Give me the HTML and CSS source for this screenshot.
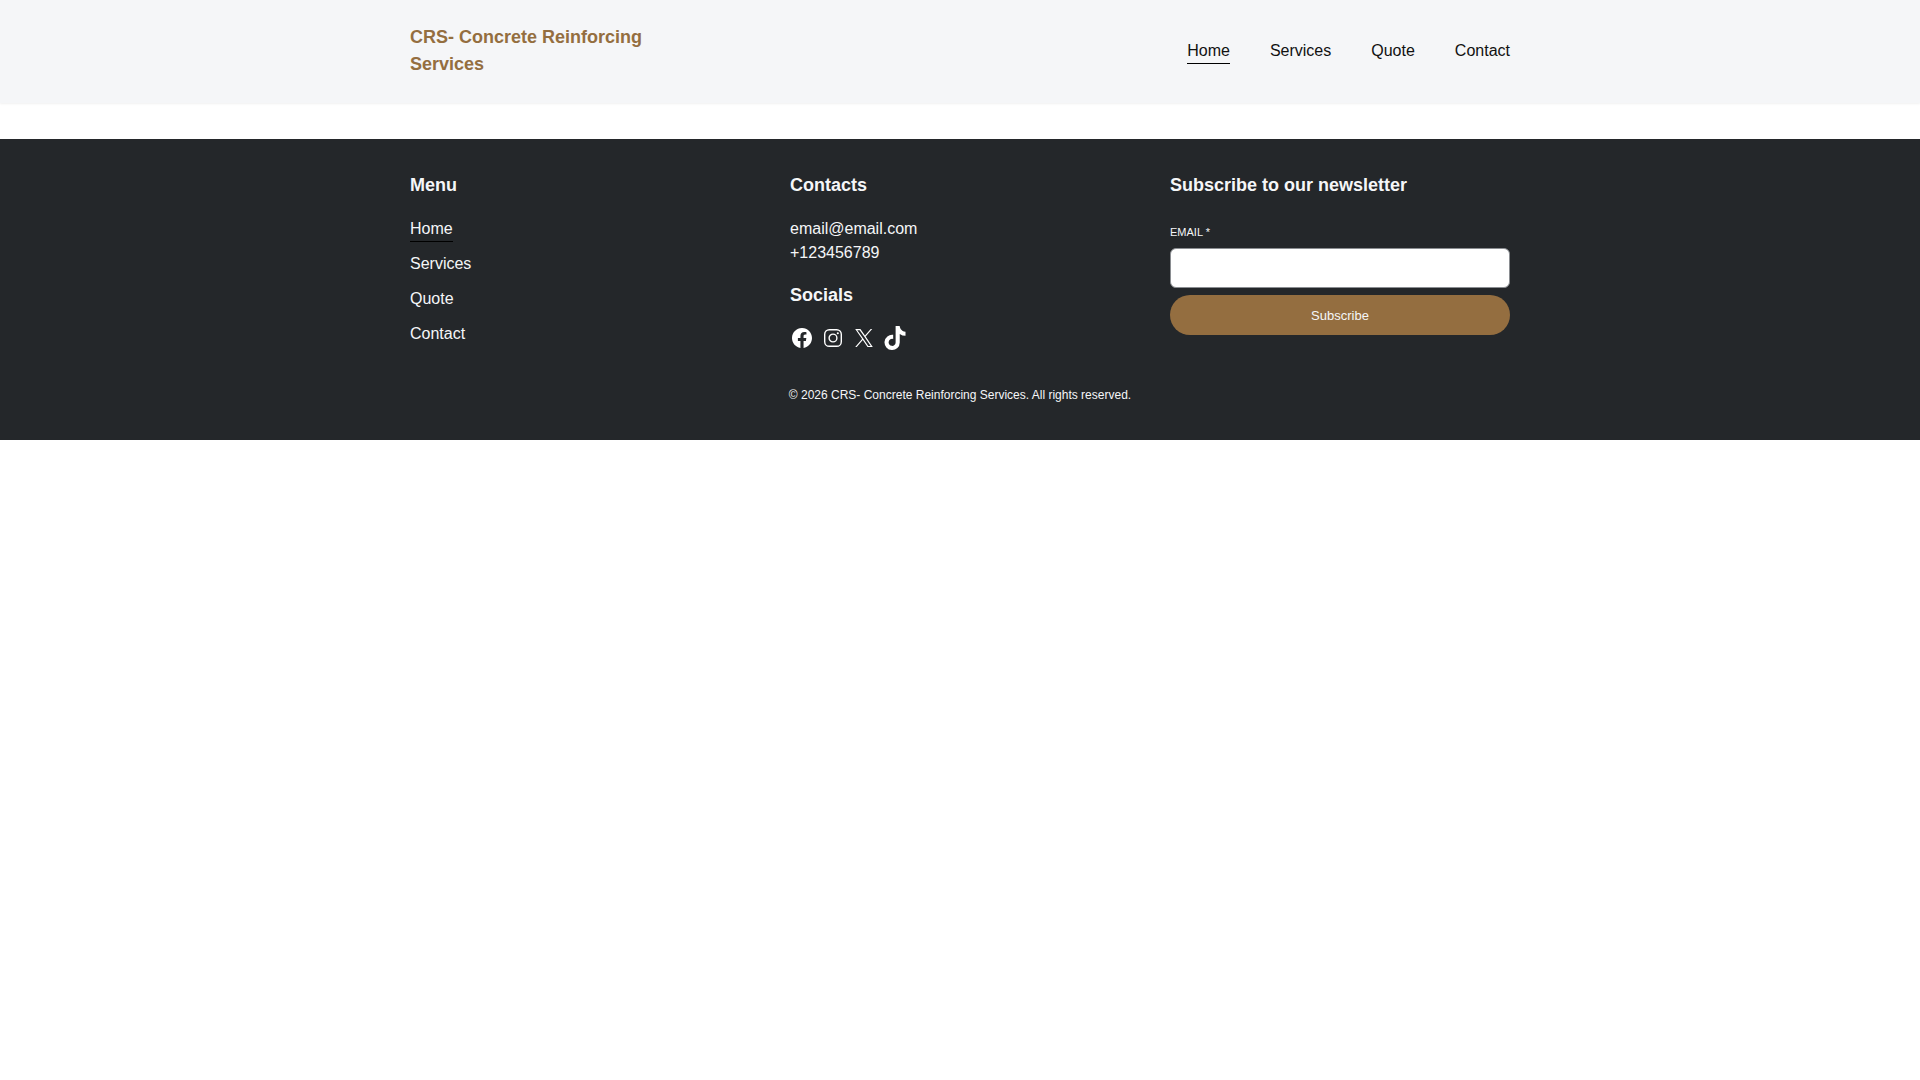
FILE: index.html
```html
<!DOCTYPE html>
<html lang="en">
<head>
<meta charset="utf-8">
<title>CRS- Concrete Reinforcing Services</title>
<link rel="stylesheet" href="styles.css">
</head>
<body>
<header class="site-header">
  <div class="container header-row">
    <a class="brand" href="#">CRS- Concrete Reinforcing Services</a>
    <nav class="main-nav">
      <a class="nav-link active" href="#">Home</a>
      <a class="nav-link" href="#">Services</a>
      <a class="nav-link" href="#">Quote</a>
      <a class="nav-link" href="#">Contact</a>
    </nav>
  </div>
</header>
<footer class="site-footer">
  <div class="container">
    <div class="footer-grid">
      <section class="col">
        <h3 class="footer-title">Menu</h3>
        <ul class="footer-menu">
          <li><a class="footer-link active" href="#">Home</a></li>
          <li><a class="footer-link" href="#">Services</a></li>
          <li><a class="footer-link" href="#">Quote</a></li>
          <li><a class="footer-link" href="#">Contact</a></li>
        </ul>
      </section>
      <section class="col">
        <h3 class="footer-title">Contacts</h3>
        <p class="contact-lines">email@email.com<br>+123456789</p>
        <h3 class="footer-title socials-title">Socials</h3>
        <div class="socials">
          <a class="social" href="#" aria-label="Facebook"><svg class="ic ic-fb" viewBox="0 0 16 16"><path fill="#fff" d="M16 8.049c0-4.446-3.582-8.05-8-8.05C3.58 0-.002 3.603-.002 8.05c0 4.017 2.926 7.347 6.75 7.951v-5.625h-2.03V8.05H6.75V6.275c0-2.017 1.195-3.131 3.022-3.131.876 0 1.791.157 1.791.157v1.98h-1.009c-.993 0-1.303.621-1.303 1.258v1.51h2.218l-.354 2.326H9.25V16c3.824-.604 6.75-3.934 6.75-7.951"/></svg></a>
          <a class="social" href="#" aria-label="Instagram"><svg class="ic ic-ig" viewBox="0 0 18 18"><rect x=".7" y=".7" width="16.6" height="16.6" rx="4.6" fill="none" stroke="#fff" stroke-width="1.4"/><circle cx="9" cy="9" r="3.9" fill="none" stroke="#fff" stroke-width="1.4"/><circle cx="13.8" cy="4.2" r="1.05" fill="#fff"/></svg></a>
          <a class="social" href="#" aria-label="X"><svg class="ic ic-x" viewBox="0 0 24 24"><path fill="#fff" d="M14.234 10.162 22.977 0h-2.072l-7.591 8.824L7.251 0H.258l9.168 13.343L.258 24H2.33l8.016-9.318L16.749 24h6.993zm-2.837 3.299-.929-1.329L3.076 1.56h3.182l5.965 8.532.929 1.329 7.754 11.09h-3.182z"/></svg></a>
          <a class="social" href="#" aria-label="TikTok"><svg class="ic ic-tt" viewBox="0 0 448 512"><path fill="#fff" d="M448,209.91a210.06,210.06,0,0,1-122.77-39.25V349.38A162.55,162.55,0,1,1,185,188.31V278.2a74.62,74.62,0,1,0,52.23,71.18V0l88,0a121.18,121.18,0,0,0,1.86,22.17h0A122.18,122.18,0,0,0,381,102.39a121.43,121.43,0,0,0,67,20.14Z"/></svg></a>
        </div>
      </section>
      <section class="col">
        <h3 class="footer-title">Subscribe to our newsletter</h3>
        <form class="newsletter">
          <label class="email-label" for="email">EMAIL *</label>
          <input class="email-input" id="email" type="email">
          <button class="subscribe" type="button">Subscribe</button>
        </form>
      </section>
    </div>
    <p class="copyright">© 2026 CRS- Concrete Reinforcing Services. All rights reserved.</p>
  </div>
</footer>
</body>
</html>
```
FILE: styles.css
```css
* { box-sizing: border-box; }
html, body { margin: 0; padding: 0; }
body {
  background: #fff;
  color: #000;
  font-family: "Liberation Sans", Arial, sans-serif;
  font-size: 16px;
  line-height: 24px;
}
a { color: inherit; text-decoration: none; }
.container { width: 1100px; margin: 0 auto; }

.site-header {
  height: 103px;
  background: #f5f6f8;
  box-shadow: 0 1px 2px rgba(0, 0, 0, 0.06);
}
.header-row {
  height: 101px;
  display: flex;
  align-items: center;
  justify-content: space-between;
}
.brand {
  width: 260px;
  color: #946e40;
  font-size: 18px;
  font-weight: 700;
  line-height: 27px;
}
.main-nav { display: flex; gap: 40px; margin-top: 2px; }
.nav-link { display: block; height: 25px; color: #111; }
.nav-link.active { border-bottom: 1px solid #000; }

.site-footer {
  margin-top: 36px;
  height: 301px;
  background: #24272a;
  color: #f5f6f8;
  padding-top: 33px;
}
.footer-grid {
  display: grid;
  grid-template-columns: 340px 340px 340px;
  column-gap: 40px;
}
.footer-title {
  margin: 0;
  font-size: 18px;
  font-weight: 700;
  line-height: 27px;
}
.footer-menu {
  list-style: none;
  margin: 18px 0 0;
  padding: 0;
  display: flex;
  flex-direction: column;
  gap: 8px;
}
.footer-menu li { height: 27px; }
.footer-link { display: inline-block; height: 25px; }
.footer-link.active { border-bottom: 1px solid #000; }
.contact-lines { margin: 18px 0 0; }
.socials-title { margin-top: 17px; }
.socials { display: flex; align-items: center; gap: 7px; margin-top: 17px; height: 24px; }
.social { display: flex; align-items: center; justify-content: center; width: 24px; }
.ic { display: block; }
.ic-fb { width: 20px; height: 20px; }
.ic-ig { width: 18px; height: 18px; }
.ic-x { width: 18px; height: 18px; }
.ic-tt { width: 24px; height: 24px; }

.newsletter { margin-top: 22px; display: flex; flex-direction: column; }
.email-label { font-size: 11px; line-height: 22px; }
.email-input {
  margin-top: 5px;
  height: 40px;
  border: 1px solid #8a8d91;
  border-radius: 6px;
  background: #fff;
}
.subscribe {
  margin-top: 7px;
  height: 40px;
  border: 0;
  border-radius: 20px;
  background: #946e40;
  color: #f5f6f8;
  font-family: inherit;
  font-size: 13px;
}
.copyright {
  margin: 36px 0 0;
  text-align: center;
  font-size: 12px;
  line-height: 18px;
}
```
